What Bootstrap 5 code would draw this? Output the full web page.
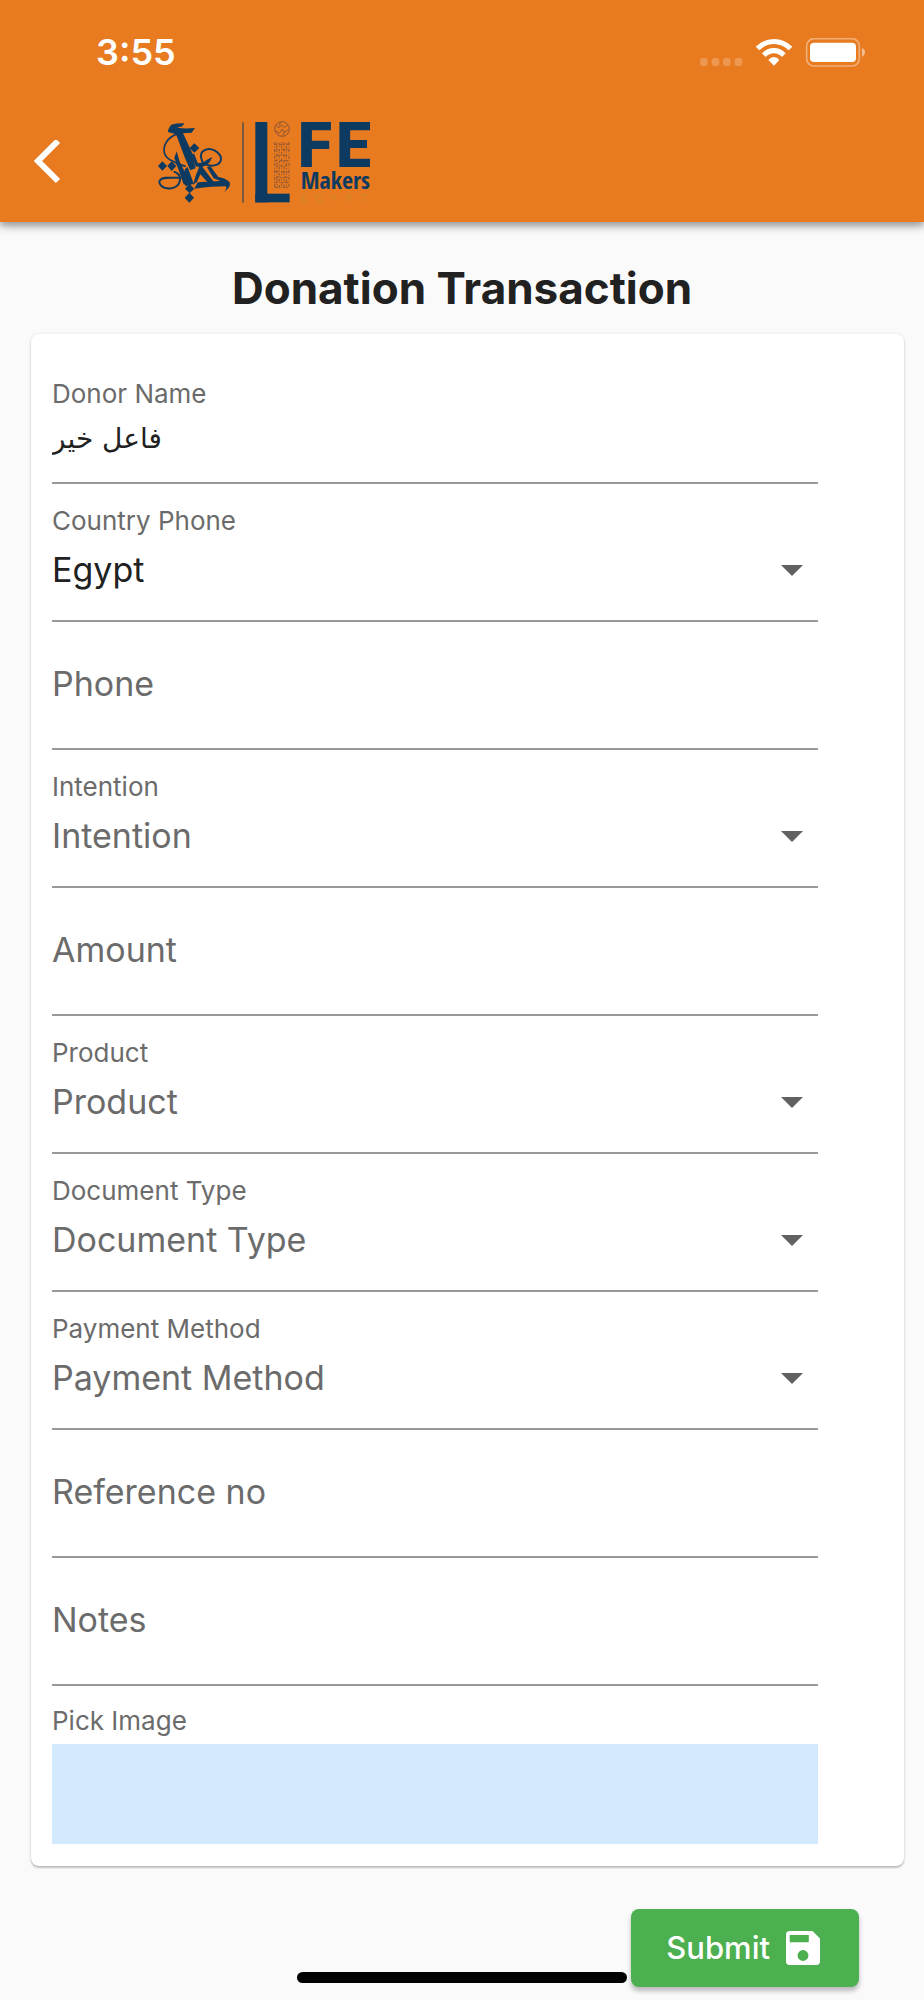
<!DOCTYPE html>
<html lang="en">
<head>
<meta charset="utf-8">
<meta name="viewport" content="width=device-width, initial-scale=1">
<title>Donation Transaction</title>
<link href="https://cdn.jsdelivr.net/npm/bootstrap@5.3.0/dist/css/bootstrap.min.css" rel="stylesheet">
<style>
  body { background: #fafafa; color: #212121; font-family: Inter, "DejaVu Sans", sans-serif; }
  .app-header { background: #e87a1f; height: 222px; box-shadow: 0 4px 10px rgba(0,0,0,.28), 0 4px 5px rgba(0,0,0,.16); }
  .status-bar { height: 104px; padding: 0 58px 0 96px; }
  .clock { font-size: 36px; font-weight: 600; line-height: 40px; }
  .tool-bar { height: 118px; padding-left: 34px; }
  .back-btn { width: 28px; margin-right: 95px; }
  .page-title { font-size: 44px; font-weight: 700; line-height: 56px; padding: 38px 0 18px; }
  .form-card { margin: 0 20px 0 31px; padding: 23px 86px 22px 21px; background: #fff; border-radius: 8px; box-shadow: 0 2px 2px rgba(0,0,0,.22), 0 0 3px rgba(0,0,0,.1); }
  .field-label { display: block; font-size: 26px; line-height: 30px; color: #6b6b6b; padding-top: 22px; }
  .field-box { display: block; width: 100%; border: 0; border-bottom: 2px solid #999; border-radius: 0; background: transparent; color: #212121; font-size: 34px; line-height: 42px; padding: 0; outline-offset: 2px; appearance: none; }
  .field-box::placeholder { color: #6b6b6b; opacity: 1; }
  .text-box { height: 128px; padding-bottom: 4px; }
  .donor-box { height: 75px; padding-bottom: 15px; font-family: "DejaVu Sans", sans-serif; font-size: 28px; }
  .select-box { height: 86px; padding: 0 48px 16px 0; }
  .select-box.unset { color: #6b6b6b; }
  .select-wrap { position: relative; }
  .select-wrap::after { content: ""; position: absolute; right: 15px; top: 29px; border: 11px solid transparent; border-top-color: #616161; border-bottom: 0; pointer-events: none; }
  .pick-label { padding-top: 20px; margin-bottom: 8px; }
  .pick-area { display: block; width: 100%; height: 100px; border: 0; background: #d3e9fe; }
  .app-footer { position: relative; padding: 43px 65px 13px; }
  .submit-btn { height: 78px; padding: 0 39px 0 35px; gap: 16px; border: 0; border-radius: 8px; background: #4caf50; color: #fff; font-size: 31px; font-weight: 500; box-shadow: 0 4px 5px rgba(0,0,0,.26); }
  .home-indicator { position: absolute; left: 50%; bottom: 17px; width: 330px; height: 11px; margin-left: -165px; border-radius: 6px; background: #000; }
</style>
</head>
<body>
<header class="app-header text-white">
  <div class="status-bar d-flex align-items-center justify-content-between">
    <span class="clock">3:55</span>
    <svg width="166" height="29" viewBox="714 114 498 87" aria-hidden="true">
      <g fill="#fff" fill-opacity=".22"><rect x="714" y="174" width="23" height="24" rx="7"/><rect x="749" y="174" width="23" height="24" rx="7"/><rect x="783" y="174" width="23" height="24" rx="7"/><rect x="818" y="174" width="23" height="24" rx="7"/></g>
      <g fill="#fff"><path d="M881 140Q905 117 936 117Q967 117 991 140L980 151Q960 132 936 132Q911 132 892 151Z"/><path d="M900 160Q915 144 936 144Q956 144 971 160L960 171Q949 160 936 160Q922 160 911 171Z"/><path d="M919 180Q926 171 936 171Q945 171 952 180L936 197Z"/><rect x="1044" y="128" width="138" height="58" rx="12"/></g>
      <rect x="1034" y="116" width="158" height="82" rx="22" fill="none" stroke="#fff" stroke-opacity=".4" stroke-width="5"/>
      <path d="M1200 144Q1209 148 1209 157Q1209 166 1200 171Z" fill="#fff" fill-opacity=".5"/>
    </svg>
  </div>
  <div class="tool-bar d-flex align-items-center">
    <button type="button" class="back-btn btn p-0 border-0" aria-label="Back">
      <svg class="d-block" width="28" height="46" viewBox="0 0 28 46"><path d="M24 1L4 21L24 41" fill="none" stroke="#fff" stroke-width="6"/></svg>
    </button>
    <svg width="213" height="118" viewBox="470 313 639 354" role="img" aria-label="Life Makers Egypt">
      <g fill="#0d3a61">
        <path d="M513 375Q530 370 552 371L546 380L530 384Q555 388 584 385L574 399L548 401L574 456L586 506L570 512L554 475L527 404L503 397Q502 388 513 375Z"/>
        <path d="M582 431L597 445L582 459L568 445Z"/>
        <path d="M486 485L500 499L486 513L473 499Z"/>
        <path d="M514 485L528 499L514 514L501 499Z"/>
        <path d="M568 553L582 567L568 581L554 567Z"/>
        <path d="M567 579L581 594L567 609L553 594Z"/>
        <path d="M529 455L538 486L560 530L574 548L566 558L550 554L522 474Z"/>
        <path d="M572 460L582 464L592 489Q605 494 620 480L636 472L628 488Q610 508 586 500Z"/>
        <path d="M600 494L611 508L632 536L640 546L626 552L600 524L590 546L578 556L586 528Z"/>
        <path d="M620 503L630 500L654 532Q675 535 688 548Q694 560 672 577Q681 565 676 560Q640 560 582 567L592 548L660 544L640 536Z"/>
        <path d="M554 508L562 502L580 552L556 560L548 530Z"/>
      </g>
      <g fill="none" stroke="#0d3a61">
        <path d="M534 402C500 412 486 440 493 462C500 482 518 482 530 492L556 500" stroke-width="5"/>
        <path d="M603 476C596 455 620 441 642 452C667 465 667 486 650 495C632 502 606 497 603 476Z" stroke-width="6"/>
        <path d="M520 516C550 525 542 560 514 566C485 569 473 552 479 542C487 529 519 536 544 534" stroke-width="6"/>
        <path d="M728 368V609" stroke-width="3"/>
      </g>
      <g fill="#0d3a61"><rect x="765" y="367" width="36" height="241"/><rect x="765" y="582" width="103" height="26"/></g>
      <g fill="none" stroke="#8f5635" stroke-width="3">
        <circle cx="845" cy="388" r="22"/>
        <path d="M827 377l8 8 8-9 9 7 10-7M826 393l11 8 9-13 7 10 11-9M841 367l-5 11M853 396l-6 12"/>
        <path d="M823 427V565M866 427V565" stroke-dasharray="9 5 3 4"/>
        <path d="M830 428V565M858 430V565" stroke-dasharray="4 5 10 6"/>
        <path d="M837 430V565M851 428V565" stroke-dasharray="7 3 2 6"/>
        <path d="M844 428V565" stroke-dasharray="3 7 6 3"/>
        <path d="M823 434h9m7 0h14m5 0h8M823 451h14m8 0h21M828 466h14m6 0h12M823 483h9m6 0h28M826 499h20m7 0h10M823 516h14m8 0h21M827 533h17m6 0h15M823 549h10m8 0h23M824 563h18m6 0h17" stroke-dasharray="8 3 4 2"/>
      </g>
      <g font-family="Roboto, sans-serif" fill="#0d3a61" font-weight="900" font-size="188">
        <text x="892" y="501">F</text><text x="1007" y="501">E</text>
      </g>
      <text x="901" y="568" font-size="72" font-weight="700" font-family="Open Sans Condensed, Open Sans, sans-serif" fill="#0d3a61">Makers</text>
      <text x="901 943 988 1035 1078" y="608" font-size="36" font-family="Lato, sans-serif" fill="#d5862a">EGYPT</text>
    </svg>
  </div>
</header>

<main>
  <h1 class="page-title text-center m-0">Donation Transaction</h1>
  <form id="donation">
    <div class="form-card">
      <label class="field-label" for="donor">Donor Name</label>
      <input class="field-box donor-box" id="donor" type="text" value="فاعل خير">

      <label class="field-label" for="country">Country Phone</label>
      <div class="select-wrap"><select class="field-box select-box" id="country"><option>Egypt</option></select></div>

      <input class="field-box text-box" type="tel" placeholder="Phone" aria-label="Phone">

      <label class="field-label" for="intention">Intention</label>
      <div class="select-wrap"><select class="field-box select-box unset" id="intention"><option>Intention</option></select></div>

      <input class="field-box text-box" type="text" inputmode="decimal" placeholder="Amount" aria-label="Amount">

      <label class="field-label" for="product">Product</label>
      <div class="select-wrap"><select class="field-box select-box unset" id="product"><option>Product</option></select></div>

      <label class="field-label" for="doctype">Document Type</label>
      <div class="select-wrap"><select class="field-box select-box unset" id="doctype"><option>Document Type</option></select></div>

      <label class="field-label" for="payment">Payment Method</label>
      <div class="select-wrap"><select class="field-box select-box unset" id="payment"><option>Payment Method</option></select></div>

      <input class="field-box text-box" type="text" placeholder="Reference no" aria-label="Reference no">
      <input class="field-box text-box" type="text" placeholder="Notes" aria-label="Notes">

      <label class="field-label pick-label" for="pick">Pick Image</label>
      <button class="pick-area" id="pick" type="button"></button>
    </div>
  </form>
</main>

<footer class="app-footer d-flex justify-content-end">
  <button class="submit-btn btn d-flex align-items-center" type="submit" form="donation">
    Submit
    <svg width="34" height="34" viewBox="0 0 100 100" aria-hidden="true"><path fill="#fff" fill-rule="evenodd" d="M11 0H78L100 22V89Q100 100 89 100H11Q0 100 0 89V11Q0 0 11 0ZM11 12V33H67V12ZM50 56A16 16 0 1 0 50 88A16 16 0 1 0 50 56Z"/></svg>
  </button>
  <div class="home-indicator"></div>
</footer>
<script src="https://cdn.jsdelivr.net/npm/bootstrap@5.3.0/dist/js/bootstrap.bundle.min.js"></script>
</body>
</html>
